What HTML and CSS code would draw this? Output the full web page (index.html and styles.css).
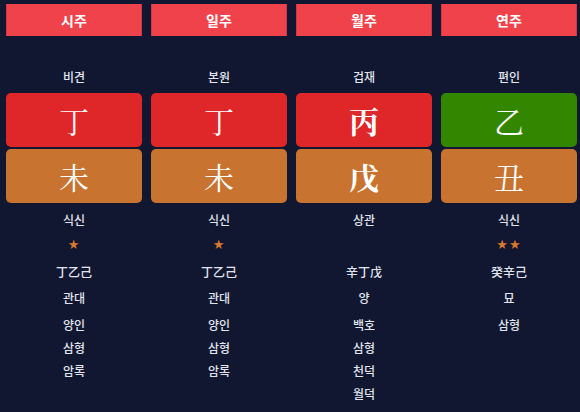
FILE: index.html
```html
<!DOCTYPE html>
<html lang="ko">
<head>
<meta charset="utf-8">
<link rel="stylesheet" href="styles.css">
</head>
<body>
<div class="grid">
  <div class="col">
    <div class="head">시주</div>
    <div class="label">비견</div>
    <div class="box fire">丁</div>
    <div class="box earth">未</div>
    <div class="god">식신</div>
    <div class="stars">★</div>
    <div class="hidden">丁乙己</div>
    <div class="stage">관대</div>
    <div class="list"><div>양인</div><div>삼형</div><div>암록</div></div>
  </div>
  <div class="col">
    <div class="head">일주</div>
    <div class="label">본원</div>
    <div class="box fire">丁</div>
    <div class="box earth">未</div>
    <div class="god">식신</div>
    <div class="stars">★</div>
    <div class="hidden">丁乙己</div>
    <div class="stage">관대</div>
    <div class="list"><div>양인</div><div>삼형</div><div>암록</div></div>
  </div>
  <div class="col">
    <div class="head">월주</div>
    <div class="label">겁재</div>
    <div class="box fire strong">丙</div>
    <div class="box earth strong">戊</div>
    <div class="god">상관</div>
    <div class="stars"></div>
    <div class="hidden">辛丁戊</div>
    <div class="stage">양</div>
    <div class="list"><div>백호</div><div>삼형</div><div>천덕</div><div>월덕</div></div>
  </div>
  <div class="col">
    <div class="head">연주</div>
    <div class="label">편인</div>
    <div class="box wood">乙</div>
    <div class="box earth">丑</div>
    <div class="god">식신</div>
    <div class="stars">★★</div>
    <div class="hidden">癸辛己</div>
    <div class="stage">묘</div>
    <div class="list"><div>삼형</div></div>
  </div>
</div>
</body>
</html>
```
FILE: styles.css
```css
html, body {
  margin: 0;
  padding: 0;
  background: #111731;
  height: 100%;
}
body {
  font-family: "Noto Sans CJK KR", "Noto Sans", sans-serif;
  color: #e2e5ee;
  font-size: 12px;
}
.grid {
  display: grid;
  grid-template-columns: repeat(4, 136px);
  column-gap: 9px;
  padding: 4px 3px 0 6px;
}
.col {
  display: flex;
  flex-direction: column;
  align-items: center;
}
.head {
  box-sizing: border-box;
  width: 100%;
  height: 32px;
  background: #f0424a;
  border-left: 1px solid #c93a42;
  border-right: 1px solid #c93a42;
  color: #fff;
  font-weight: 700;
  font-size: 14px;
  display: flex;
  align-items: center;
  justify-content: center;
}
.label {
  margin-top: 32px;
  line-height: 18px;
  font-weight: 500;
}
.box {
  width: 100%;
  height: 54px;
  border-radius: 5px;
  display: flex;
  align-items: center;
  justify-content: center;
  color: #fff;
  font-family: "Noto Serif CJK SC", "Noto Serif CJK JP", "Noto Serif", serif;
  font-size: 30px;
  font-weight: 400;
}
.label + .box { margin-top: 7px; }
.box + .box { margin-top: 2px; }
.box.strong { font-weight: 700; }
.fire { background: #df2628; }
.earth { background: #c97330; }
.wood { background: #328600; }
.god {
  margin-top: 8px;
  line-height: 18px;
  font-weight: 500;
}
.stars {
  margin-top: 7px;
  height: 18px;
  line-height: 18px;
  color: #d9782c;
  font-size: 13px;
  letter-spacing: 1px;
  font-family: "DejaVu Sans", sans-serif;
}
.hidden {
  margin-top: 9px;
  line-height: 18px;
  font-weight: 500;
}
.stage {
  margin-top: 8px;
  line-height: 18px;
  font-weight: 500;
}
.list {
  margin-top: 6px;
  line-height: 23px;
  font-weight: 500;
  text-align: center;
}
```
